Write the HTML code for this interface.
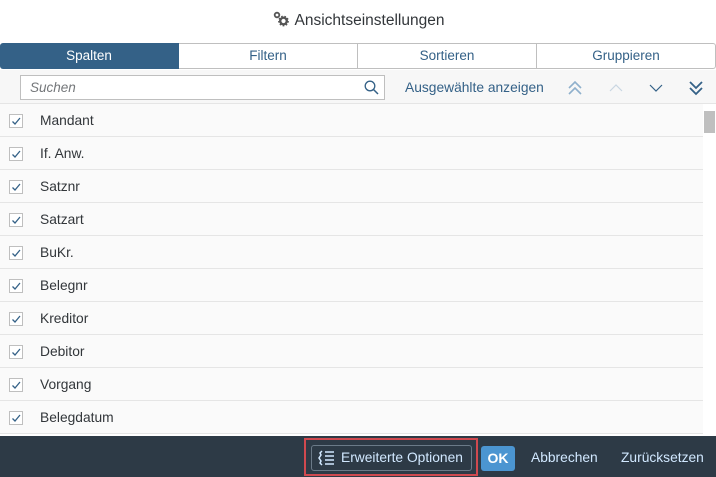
<!DOCTYPE html>
<html><head><style>
*{box-sizing:border-box;margin:0;padding:0}
body{width:716px;height:477px;background:#fff;font-family:"Liberation Sans",Arial,sans-serif;position:relative;overflow:hidden;color:#32363a}
.title{position:absolute;top:0;left:0;width:716px;height:42px;text-align:center;line-height:42px;font-size:15.5px;color:#32363a}
.tabs{position:absolute;top:43px;left:0;width:716px;height:26px;display:flex}
.tab{flex:1;border:1px solid #bfbfbf;border-left:none;text-align:center;line-height:24px;font-size:13.5px;color:#346187;background:#fff}
.tab.a{background:#346187;color:#fff;border-color:#346187;border-radius:3px 0 0 3px}
.tab:last-child{border-radius:0 3px 3px 0}
.bar{position:absolute;top:70px;left:0;width:716px;height:34px;background:#f7f7f7;border-bottom:1px solid #e5e5e5}
.search{position:absolute;left:20px;top:5px;width:365px;height:25px;border:1px solid #bfbfbf;background:#fff;font-style:italic;font-size:13.5px;color:#74777a;padding-left:9px;line-height:23px}
.ln{position:absolute;font-size:13.8px;color:#346187;top:10px;left:405px}
.row{position:absolute;left:0;width:703px;height:33px;border-bottom:1px solid #e5e5e5;background:#fafafa;font-size:13.8px;line-height:33px;padding-left:40px}
.cb{position:absolute;left:9px;top:10px;width:14px;height:14px;border:1px solid #bfbfbf;background:#fff}
.sb{position:absolute;left:703px;top:104px;width:13px;height:332px;background:#fff}
.th{position:absolute;left:704px;top:111px;width:11px;height:22px;background:#bfbfbf}
.foot{position:absolute;top:436px;left:0;width:716px;height:41px;background:#2d3a46}
.fb{position:absolute;font-size:13.8px;color:#d1e8ff;top:14px}
</style></head><body>
<div class="title"><svg width="18" height="18" viewBox="0 0 18 18" style="vertical-align:-3px;margin-right:5px"><circle cx="5" cy="5" r="2.3" fill="none" stroke="#555" stroke-width="1.8"/><circle cx="11.5" cy="11" r="3.3" fill="none" stroke="#555" stroke-width="2.4"/><circle cx="11.5" cy="11" r="4.6" fill="none" stroke="#555" stroke-width="1.6" stroke-dasharray="1.6 1.6"/></svg>Ansichtseinstellungen</div>
<div class="tabs"><div class="tab a">Spalten</div><div class="tab">Filtern</div><div class="tab">Sortieren</div><div class="tab">Gruppieren</div></div>
<div class="bar">
<div class="search">Suchen<svg style="position:absolute;right:5px;top:4px" width="15" height="15" viewBox="0 0 15 15"><circle cx="6" cy="6" r="4.8" fill="none" stroke="#346187" stroke-width="1.3"/><path d="M9.5 9.5L14 14" stroke="#346187" stroke-width="1.5"/></svg></div>
<div class="ln">Ausgewählte anzeigen</div>
<svg style="position:absolute;left:567px;top:10px" width="16" height="16"><path d="M2 8L8 2L14 8M2 14L8 8L14 14" fill="none" stroke="#8fb0cc" stroke-width="1.6"/></svg>
<svg style="position:absolute;left:609px;top:13px" width="14" height="10"><path d="M1 8L7 2L13 8" fill="none" stroke="#c9d6e2" stroke-width="1.2"/></svg>
<svg style="position:absolute;left:649px;top:13px" width="14" height="10"><path d="M1 2L7 8L13 2" fill="none" stroke="#346187" stroke-width="1.2"/></svg>
<svg style="position:absolute;left:688px;top:10px" width="16" height="16"><path d="M2 2L8 8L14 2M2 8L8 14L14 8" fill="none" stroke="#346187" stroke-width="1.8"/></svg>
</div>
<div id="rows"></div>
<div class="sb"></div><div class="th"></div>
<div class="foot">
<div style="position:absolute;left:304px;top:2px;width:174px;height:38px;border:2px solid #d0494f"></div>
<div style="position:absolute;left:311px;top:9px;width:161px;height:26px;border:1px solid #6b7a88;border-radius:3px"></div>
<svg style="position:absolute;left:317px;top:13px" width="20" height="18"><path d="M8 3H17M8 7H17M8 11H17M8 15H17" fill="none" stroke="#d1e8ff" stroke-width="1.6"/><path d="M5 2L3 4L4 6L2 9L4 12L3 14L5 16" fill="none" stroke="#d1e8ff" stroke-width="1.5"/></svg>
<div class="fb" style="left:341px">Erweiterte Optionen</div>
<div style="position:absolute;left:481px;top:10px;width:34px;height:25px;background:#4b95d1;border-radius:3px;color:#fff;font-weight:bold;font-size:14px;text-align:center;line-height:25px">OK</div>
<div class="fb" style="left:531px">Abbrechen</div>
<div class="fb" style="left:621px">Zurücksetzen</div>
</div>
<script>
var n=["Mandant","If. Anw.","Satznr","Satzart","BuKr.","Belegnr","Kreditor","Debitor","Vorgang","Belegdatum"],h="";
n.forEach(function(t,i){h+='<div class="row" style="top:'+(104+i*33)+'px"><div class="cb"><svg width="12" height="12" style="position:absolute;left:0;top:0"><path d="M2.5 6.5L5 9L10 3" fill="none" stroke="#346187" stroke-width="1.3"/></svg></div>'+t+'</div>'});
document.getElementById("rows").innerHTML=h;
</script>
</body></html>
